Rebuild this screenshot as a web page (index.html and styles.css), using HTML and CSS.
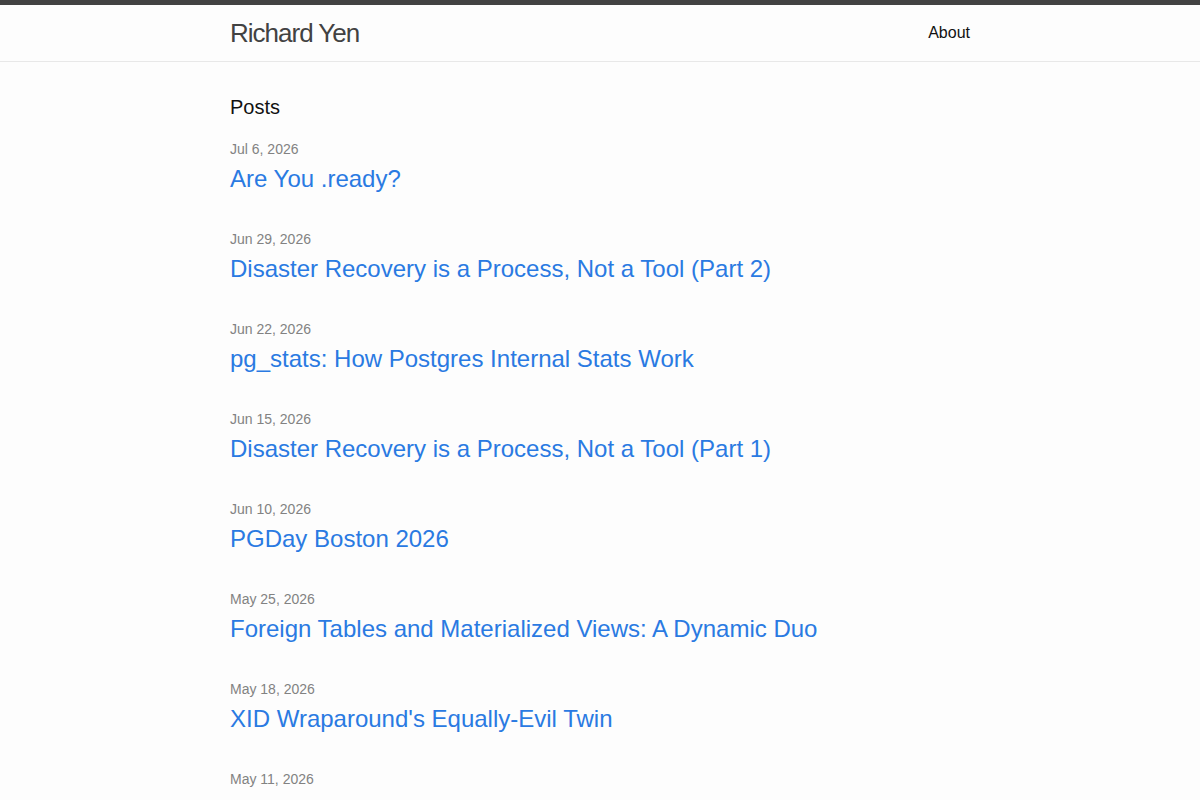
FILE: index.html
```
<!doctype html>
<html lang="en">
<head>
    <meta charset="UTF-8">
    <meta name="viewport" content="width=device-width, initial-scale=1.0">
    <title>Richard Yen</title>
    <link rel="stylesheet" href="styles.css">
</head>
<body>
    <header class="site-header">
        <div class="wrapper header-row">
            <a class="site-title" href="#">Richard Yen</a>
            <nav class="site-nav">
                <a class="page-link" href="#">About</a>
            </nav>
        </div>
    </header>

    <main class="page-content">
        <div class="wrapper">
            <h2 class="post-list-heading">Posts</h2>
            <ul class="post-list">
                <li>
                    <span class="post-meta">Jul 6, 2026</span>
                    <h3><a class="post-link" href="#">Are You .ready?</a></h3>
                </li>
                <li>
                    <span class="post-meta">Jun 29, 2026</span>
                    <h3><a class="post-link" href="#">Disaster Recovery is a Process, Not a Tool (Part 2)</a></h3>
                </li>
                <li>
                    <span class="post-meta">Jun 22, 2026</span>
                    <h3><a class="post-link" href="#">pg_stats: How Postgres Internal Stats Work</a></h3>
                </li>
                <li>
                    <span class="post-meta">Jun 15, 2026</span>
                    <h3><a class="post-link" href="#">Disaster Recovery is a Process, Not a Tool (Part 1)</a></h3>
                </li>
                <li>
                    <span class="post-meta">Jun 10, 2026</span>
                    <h3><a class="post-link" href="#">PGDay Boston 2026</a></h3>
                </li>
                <li>
                    <span class="post-meta">May 25, 2026</span>
                    <h3><a class="post-link" href="#">Foreign Tables and Materialized Views: A Dynamic Duo</a></h3>
                </li>
                <li>
                    <span class="post-meta">May 18, 2026</span>
                    <h3><a class="post-link" href="#">XID Wraparound's Equally-Evil Twin</a></h3>
                </li>
                <li>
                    <span class="post-meta">May 11, 2026</span>
                </li>
            </ul>
        </div>
    </main>
</body>
</html>
```

FILE: styles.css
```
* {
    margin: 0;
    padding: 0;
}

body {
    font: 400 16px/1.5 "Liberation Sans", Arial, Helvetica, sans-serif;
    color: #111111;
    background-color: #fdfdfd;
}

a {
    text-decoration: none;
}

li {
    list-style: none;
}

.wrapper {
    max-width: 740px;
    margin: 0 auto;
    padding: 0 30px;
}

.site-header {
    min-height: 56px;
    border-top: 5px solid #424242;
    border-bottom: 1px solid #e8e8e8;
}

.header-row {
    display: flex;
    justify-content: space-between;
    align-items: center;
}

.site-title {
    font-size: 26px;
    font-weight: 300;
    line-height: 56px;
    letter-spacing: -1px;
    color: #424242;
}

.site-nav {
    line-height: 56px;
}

.page-link {
    color: #111111;
    line-height: 1.5;
}

.page-content {
    padding: 30px 0;
}

.post-list-heading {
    font-size: 20px;
    font-weight: 400;
    line-height: 30px;
    margin-bottom: 15px;
}

.post-list li {
    margin-bottom: 30px;
}

.post-meta {
    font-size: 14px;
    color: #828282;
}

.post-list h3 {
    font-weight: 400;
    line-height: 36px;
}

.post-link {
    display: block;
    font-size: 24px;
    color: #2a7ae2;
}
```
